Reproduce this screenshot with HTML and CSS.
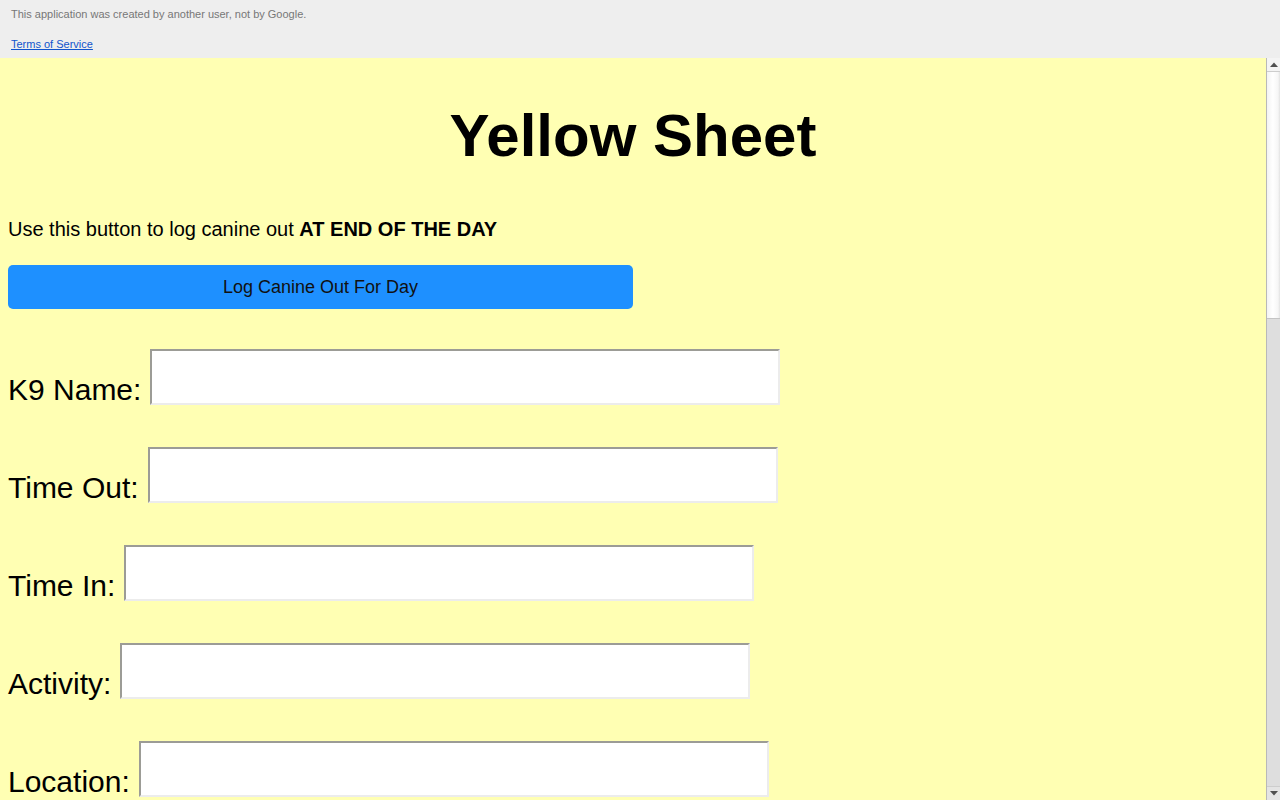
FILE: index.html
```html
<!DOCTYPE html>
<html lang="en">
<head>
<meta charset="utf-8">
<title>Yellow Sheet</title>
<link rel="stylesheet" href="styles.css">
</head>
<body>
<div class="page">
  <header class="gbar">
    <p class="notice">This application was created by another user, not by Google.</p>
    <a class="tos" href="#">Terms of Service</a>
  </header>
  <main class="frame">
    <div class="viewport">
      <div class="content">
        <h1 class="title">Yellow Sheet</h1>
        <p class="intro">Use this button to log canine out <strong>AT END OF THE DAY</strong></p>
        <button class="logout" type="button">Log Canine Out For Day</button>
        <form class="sheet">
          <div class="row"><label class="lbl" for="k9">K9 Name:</label><input class="field" id="k9" type="text"></div>
          <div class="row"><label class="lbl" for="tout">Time Out:</label><input class="field" id="tout" type="text"></div>
          <div class="row"><label class="lbl" for="tin">Time In:</label><input class="field" id="tin" type="text"></div>
          <div class="row"><label class="lbl" for="act">Activity:</label><input class="field" id="act" type="text"></div>
          <div class="row"><label class="lbl" for="loc">Location:</label><input class="field" id="loc" type="text"></div>
        </form>
      </div>
    </div>
    <div class="vscroll" aria-hidden="true">
      <div class="sbtn sbtn-up">
        <svg width="8" height="5" viewBox="0 0 8 5"><path d="M0 5 L4 0.5 L8 5 Z" fill="#505050"/></svg>
      </div>
      <div class="sthumb"></div>
      <div class="strack"></div>
      <div class="sbtn sbtn-down">
        <svg width="8" height="5" viewBox="0 0 8 5"><path d="M0 0 L4 4.5 L8 0 Z" fill="#505050"/></svg>
      </div>
    </div>
  </main>
</div>
</body>
</html>
```

FILE: styles.css
```css
html, body {
  margin: 0;
  padding: 0;
  height: 100%;
}

body {
  font-family: "Liberation Sans", Arial, sans-serif;
  color: #000;
}

.page {
  display: flex;
  flex-direction: column;
  height: 100vh;
}

.gbar {
  flex: 0 0 58px;
  box-sizing: border-box;
  background: #eeeeee;
  padding: 8px 11px 0;
  font-size: 11px;
  line-height: 13px;
}

.notice {
  margin: 0;
  color: #777777;
}

.tos {
  display: inline-block;
  margin-top: 17px;
  color: #1155cc;
  text-decoration: underline;
}

.frame {
  flex: 1 1 auto;
  min-height: 0;
  display: flex;
  background: #ffffb3;
}

.viewport {
  flex: 1 1 auto;
  overflow: hidden;
}

.content {
  padding: 0 8px;
}

.vscroll {
  flex: 0 0 14px;
  box-sizing: border-box;
  display: flex;
  flex-direction: column;
  border-left: 1px solid #b9b9b9;
  background: #dedede;
}

.sbtn {
  flex: 0 0 13px;
  display: flex;
  align-items: center;
  justify-content: center;
  background: #f4f4f4;
}

.sbtn-up {
  border-bottom: 1px solid #cdcdcd;
}

.sbtn-down {
  border-top: 1px solid #cdcdcd;
  background: #e4e4e4;
}

.sthumb {
  flex: 0 0 246px;
  background: linear-gradient(to right, #f3f3f3, #ffffff 45%, #f6f6f6 85%, #e2e2e2);
  border-bottom: 1px solid #c4c4c4;
}

.strack {
  flex: 1 1 auto;
  background: #dedede;
}

.title {
  margin: 43px 0 0;
  font-size: 60px;
  line-height: 69px;
  font-weight: bold;
  text-align: center;
}

.intro {
  margin: 48px 0 0;
  font-size: 20px;
  line-height: 23px;
}

.logout {
  display: block;
  margin-top: 24px;
  width: 625px;
  height: 44px;
  border: none;
  border-radius: 5px;
  background: #1e90ff;
  color: #111111;
  font-family: "Liberation Sans", Arial, sans-serif;
  font-size: 18px;
  padding: 0;
}

.sheet {
  margin-top: 40px;
  display: flex;
  flex-direction: column;
  gap: 42px;
}

.row {
  display: flex;
  align-items: flex-end;
  gap: 9px;
}

.lbl {
  font-size: 30px;
  line-height: 34px;
  margin-bottom: -2px;
}

.field {
  flex: 0 0 auto;
  box-sizing: border-box;
  width: 630px;
  height: 56px;
  margin: 0;
  padding: 2px 4px;
  background: #ffffff;
  border: 2px solid;
  border-color: #9c9c96 #ececec #ececec #9c9c96;
  font-family: "Liberation Sans", Arial, sans-serif;
  font-size: 20px;
}
```
